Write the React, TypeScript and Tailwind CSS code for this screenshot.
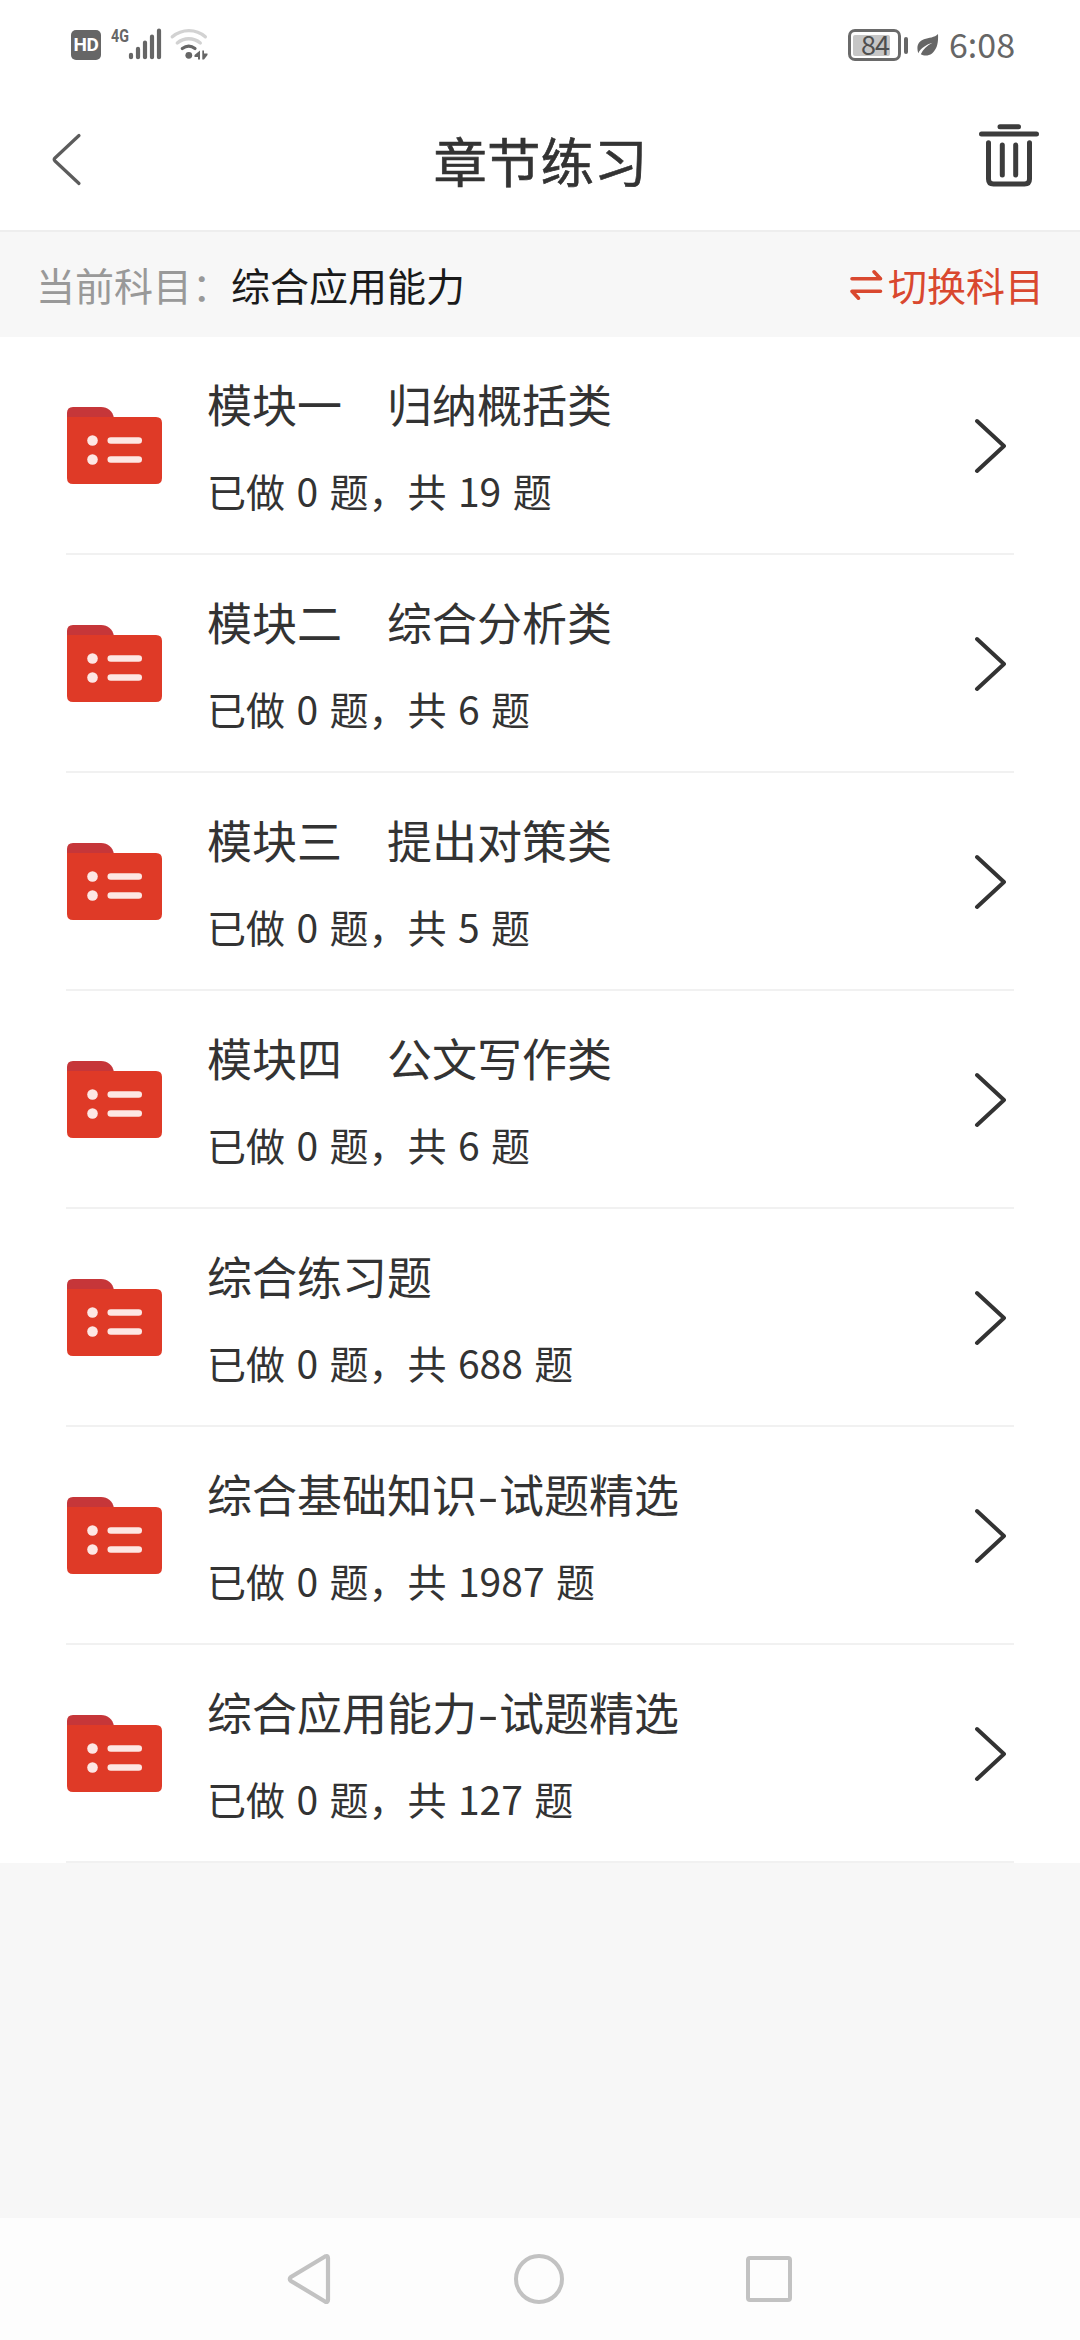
interface Chapter {
  title: string;
  suffix?: string;
  done: number;
  total: number;
}

const chapters: Chapter[] = [
  { title: "模块一　归纳概括类", done: 0, total: 19 },
  { title: "模块二　综合分析类", done: 0, total: 6 },
  { title: "模块三　提出对策类", done: 0, total: 5 },
  { title: "模块四　公文写作类", done: 0, total: 6 },
  { title: "综合练习题", done: 0, total: 688 },
  { title: "综合基础知识", suffix: "试题精选", done: 0, total: 1987 },
  { title: "综合应用能力", suffix: "试题精选", done: 0, total: 127 }
];

function StatusBar() {
  return (
    <div className="h-[90px] pl-[71px] pr-[65px] flex items-center justify-between text-[#666666]">
      <div className="flex items-center">
        <div className="w-[30px] h-[30px] rounded-[5px] bg-[#666666] flex items-center justify-center">
          <span className="font-['Roboto',sans-serif] text-white text-[19px] font-bold leading-[26px] tracking-[-0.5px]">HD</span>
        </div>
        <span className="ml-[10px] mb-[19px] w-[17px] font-['Roboto',sans-serif] text-[19px] font-bold leading-[24px] origin-left scale-x-[0.75]">
          4G
        </span>
        <svg width="82" height="36" viewBox="128 27 82 36" fill="none">
          {/* Signal bars */}
          <path
            d="M131 54.8V57.2M138 48.8V57.2M145 42.5V57.2M152 36.5V57.2M159 30.5V57.2"
            stroke="#666666"
            strokeWidth="4.2"
            strokeLinecap="round"
          />
          {/* Wifi */}
          <path d="M172.3 36.8C182 28.600 196 28.600 205.3 36.8" stroke="#d2d2d2" strokeWidth="3.4" strokeLinecap="round" />
          <path d="M177.3 43C184 37.400 193.5 37.400 200.3 43" stroke="#d2d2d2" strokeWidth="3.4" strokeLinecap="round" />
          <path d="M182.3 48.6C186.5 45.4 191 45.4 195 48.6" stroke="#666666" strokeWidth="3.2" strokeLinecap="round" />
          <circle cx="188.8" cy="55.3" r="3.4" fill="#666666" />
          <path d="M200 50.5V59.5H198V57H194.5V55ZM202.3 50.5H204V53.5H207.5V55L204 59.5H202.3Z" fill="#666666" />
        </svg>
      </div>

      <div className="flex items-center">
        <div className="relative w-[53px] h-[32px] rounded-[7px] border-[3.5px] border-[#6a6a6a] p-[2.5px]">
          <div className="w-[37px] h-full rounded-[2px] bg-[#c6c6c6]" />
          <span className="absolute left-[10px] top-[-1px] text-[27px] leading-[26px] tracking-[-1px] text-[#4f4f4f]">84</span>
        </div>
        <div className="ml-[3px] w-[4px] h-[17px] rounded-full bg-[#666666]" />
        <svg className="ml-[9px]" width="22" height="24" viewBox="0 0 22 24">
          <path
            d="M21 1C21.5 10 20 16.500 15 20.500C11 23.500 6.500 22.800 3.800 21.300C6 16.500 10 12.500 15.500 9.800C9.500 11.500 4 15 1.200 20.200C-0.800 13.500 1 8.500 7 6.300C12 4.500 17.500 4.800 21 1Z"
            fill="#666666"
          />
        </svg>
        <span className="ml-[10px] mb-[2px] text-[34px] leading-[50px] text-[#666666]">6:08</span>
      </div>
    </div>
  );
}

function FolderIcon() {
  return (
    <svg className="shrink-0" width="95" height="77" viewBox="0 0 95 77">
      <path d="M0 20V6Q0 0 6 0H34C41 0 45.500 4 47 11V20Z" fill="#c63639" />
      <path d="M0 10H89Q95 10 95 16V71Q95 77 89 77H6Q0 77 0 71Z" fill="#df3a27" />
      <circle cx="25.500" cy="33.500" r="5.300" fill="#fde7e4" />
      <circle cx="25.500" cy="52.500" r="5.300" fill="#fde7e4" />
      <rect x="40.500" y="30.200" width="34.500" height="6.600" rx="3.300" fill="#fde7e4" />
      <rect x="40.500" y="49.200" width="34.500" height="6.600" rx="3.300" fill="#fde7e4" />
    </svg>
  );
}

function ChapterRow({ chapter }: { chapter: Chapter }) {
  return (
    <div className="mx-[66px] h-[218px] border-b-2 border-[#f1f1f1] flex items-center">
      <div className="pl-[1px]">
        <FolderIcon />
      </div>
      <div className="ml-[45px] pt-[2px] flex-1 text-[#333333]">
        <h3 className="text-[45px] leading-[60px] whitespace-pre">
          {chapter.title}
          {chapter.suffix && (
            <>
              <span className="inline-block w-[22px] text-center scale-x-[1.35]">-</span>
              {chapter.suffix}
            </>
          )}
        </h3>
        <p className="mt-[28px] text-[39px] leading-[56px] [word-spacing:2.7px]">
          已做 {chapter.done} 题，共 {chapter.total} 题
        </p>
      </div>
      <svg className="mt-[2px] mr-[8px] shrink-0" width="32" height="56" viewBox="0 0 32 56" fill="none">
        <path d="M3 3L30 28L3 53" stroke="#333333" strokeWidth="4" strokeLinecap="round" strokeLinejoin="round" />
      </svg>
    </div>
  );
}

export default function App() {
  return (
    <div className="w-[1080px] h-[2340px] flex flex-col bg-[#f7f7f7] overflow-hidden font-['Noto_Sans_CJK_SC',sans-serif]">
      <header className="bg-white border-b-2 border-[#eeeeee]">
        <StatusBar />
        <div className="h-[140px] pl-[50px] pr-[39px] flex items-center justify-between">
          <svg width="54" height="54" viewBox="0 0 54 54" fill="none">
            <path d="M29 2.500L5 25Q3.500 26.500 5 28L29 50.500" stroke="#5c5c5c" strokeWidth="3.200" strokeLinecap="round" />
          </svg>
          <h1 className="text-[53.500px] leading-[70px] text-[#333333] [-webkit-text-stroke:0.6px_#333333]">章节练习</h1>
          <svg className="mb-[10px]" width="64" height="66" viewBox="976 122 64 66" fill="none" stroke="#3c3c3c" strokeWidth="5" strokeLinecap="round">
            <path d="M999 126.700H1017.500M980.500 134H1035.500" />
            <path d="M987.500 142.800V179Q987.500 184 992.500 184H1023.500Q1028.500 184 1028.500 179V142.800" />
            <path d="M1001.300 145V175M1014.700 145V175" />
          </svg>
        </div>
      </header>

      <div className="h-[105px] px-[36px] flex items-center justify-between bg-[#f7f7f7] text-[39px] leading-none">
        <div className="flex items-center">
          <span className="text-[#999999]">当前科目：</span>
          <span className="text-[#1a1a1a]">综合应用能力</span>
        </div>
        <button className="flex items-center text-[#d9482f]">
          <svg width="34" height="32" viewBox="848 268 34 32" fill="none" stroke="currentColor" strokeWidth="3.600" strokeLinecap="round" strokeLinejoin="round">
            <path d="M851 277.800H879.500L873 270.800M879.500 290.200H851L857.500 297.200" />
          </svg>
          <span className="ml-[5px]">切换科目</span>
        </button>
      </div>

      <main className="bg-white">
        {chapters.map((chapter, idx) => (
          <ChapterRow key={idx} chapter={chapter} />
        ))}
      </main>

      {/* System navigation */}
      <nav className="mt-auto h-[122px] bg-[#fdfdfd] pl-[286px] pr-[288px] flex items-center justify-between">
        <svg width="46" height="54" viewBox="0 0 46 54" fill="none">
          <path d="M42 6V48Q42 51 39 49.500L5 29Q2.500 27 5 25L39 4.500Q42 3 42 6Z" stroke="#c2c2c2" strokeWidth="4.200" />
        </svg>
        <div className="w-[50px] h-[50px] rounded-full border-[4.500px] border-[#c2c2c2]" />
        <div className="w-[46px] h-[46px] rounded-[4px] border-[4.500px] border-[#c2c2c2]" />
      </nav>
    </div>
  );
}
